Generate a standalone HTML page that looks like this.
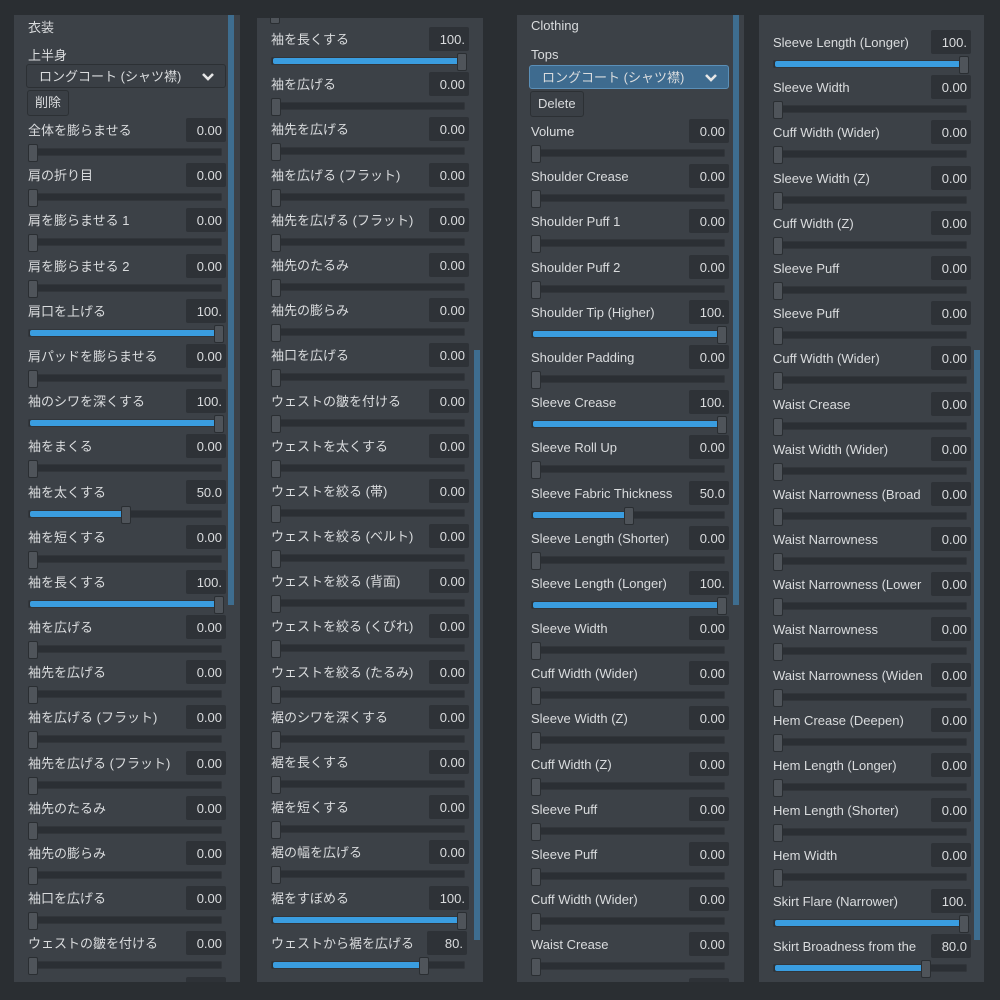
<!DOCTYPE html><html><head><meta charset="utf-8"><style>
body{margin:0;width:1000px;height:1000px;background:#2a2e32;font-family:"Liberation Sans","Noto Sans CJK JP",sans-serif;color:#dadcde;font-size:13px;position:relative;overflow:hidden}
.p{position:absolute;background:#3c4147;overflow:hidden;top:15px;height:967px;width:226px}
.sb{position:absolute;width:6px;background:#3e6d8f}
.ls{position:absolute;left:14px;width:198px}
.r{position:relative;height:45.2px}
.l{position:absolute;left:0;top:6px;line-height:18px;white-space:nowrap;width:155px;overflow:hidden}
.v{position:absolute;right:0;top:2px;width:40px;height:24px;background:#2e3237;border-radius:2px;text-align:right;box-sizing:border-box;padding-right:4px;line-height:25px}
.t{position:absolute;left:0;top:32px;width:194px;height:8px;background:#2b2f34;border-radius:2px;box-shadow:inset 0 0 0 1px #32363b}
.f{position:absolute;left:2px;top:33px;height:6px;background:#3a9de0;border-radius:2px}
.k{position:absolute;top:28px;width:8px;height:16px;background:#4f545a;border:1px solid #2a2e32;border-radius:2px}
.h{position:absolute;left:14px}
.dd{position:absolute;left:12px;width:200px;height:24px;border:1px solid #2c3034;border-radius:3px;background:#3a3f45;line-height:24px;padding-left:12px;box-sizing:border-box}
.dd svg{position:absolute;right:10px;top:7px}
.bt{position:absolute;left:13px;height:24px;border:1px solid #2c3034;border-radius:3px;background:#3a3f45;line-height:24px;padding:0 7px}
</style></head><body>

<div class="p" style="left:14px">
<div class="sb" style="left:214px;top:0;height:590px"></div>
<div class="h" style="top:2px">衣装</div>
<div class="h" style="top:30px">上半身</div>
<div class="dd" style="top:49px">ロングコート (シャツ襟)<svg width="14" height="10" viewBox="0 0 14 10"><path d="M2 2l5 5 5-5" fill="none" stroke="#e6e6e6" stroke-width="2.6"/></svg></div>
<div class="bt" style="top:75px">削除</div>
<div class="ls" style="top:101px">
<div class="r"><div class="l">全体を膨らませる</div><div class="v">0.00</div><div class="t"></div><div class="k" style="left:0"></div></div>
<div class="r"><div class="l">肩の折り目</div><div class="v">0.00</div><div class="t"></div><div class="k" style="left:0"></div></div>
<div class="r"><div class="l">肩を膨らませる 1</div><div class="v">0.00</div><div class="t"></div><div class="k" style="left:0"></div></div>
<div class="r"><div class="l">肩を膨らませる 2</div><div class="v">0.00</div><div class="t"></div><div class="k" style="left:0"></div></div>
<div class="r"><div class="l">肩口を上げる</div><div class="v">100.</div><div class="t"></div><div class="f" style="width:186px"></div><div class="k" style="left:186px"></div></div>
<div class="r"><div class="l">肩パッドを膨らませる</div><div class="v">0.00</div><div class="t"></div><div class="k" style="left:0"></div></div>
<div class="r"><div class="l">袖のシワを深くする</div><div class="v">100.</div><div class="t"></div><div class="f" style="width:186px"></div><div class="k" style="left:186px"></div></div>
<div class="r"><div class="l">袖をまくる</div><div class="v">0.00</div><div class="t"></div><div class="k" style="left:0"></div></div>
<div class="r"><div class="l">袖を太くする</div><div class="v">50.0</div><div class="t"></div><div class="f" style="width:93px"></div><div class="k" style="left:93px"></div></div>
<div class="r"><div class="l">袖を短くする</div><div class="v">0.00</div><div class="t"></div><div class="k" style="left:0"></div></div>
<div class="r"><div class="l">袖を長くする</div><div class="v">100.</div><div class="t"></div><div class="f" style="width:186px"></div><div class="k" style="left:186px"></div></div>
<div class="r"><div class="l">袖を広げる</div><div class="v">0.00</div><div class="t"></div><div class="k" style="left:0"></div></div>
<div class="r"><div class="l">袖先を広げる</div><div class="v">0.00</div><div class="t"></div><div class="k" style="left:0"></div></div>
<div class="r"><div class="l">袖を広げる (フラット)</div><div class="v">0.00</div><div class="t"></div><div class="k" style="left:0"></div></div>
<div class="r"><div class="l">袖先を広げる (フラット)</div><div class="v">0.00</div><div class="t"></div><div class="k" style="left:0"></div></div>
<div class="r"><div class="l">袖先のたるみ</div><div class="v">0.00</div><div class="t"></div><div class="k" style="left:0"></div></div>
<div class="r"><div class="l">袖先の膨らみ</div><div class="v">0.00</div><div class="t"></div><div class="k" style="left:0"></div></div>
<div class="r"><div class="l">袖口を広げる</div><div class="v">0.00</div><div class="t"></div><div class="k" style="left:0"></div></div>
<div class="r"><div class="l">ウェストの皺を付ける</div><div class="v">0.00</div><div class="t"></div><div class="k" style="left:0"></div></div>
<div class="r"><div class="l"></div><div class="v"></div></div>
</div></div>

<div class="p" style="left:257px;top:18px;height:964px">
<div class="sb" style="left:217px;top:332px;height:590px"></div>
<div class="k" style="left:13px;top:-12px"></div>
<div class="ls" style="top:7px">
<div class="r"><div class="l">袖を長くする</div><div class="v">100.</div><div class="t"></div><div class="f" style="width:186px"></div><div class="k" style="left:186px"></div></div>
<div class="r"><div class="l">袖を広げる</div><div class="v">0.00</div><div class="t"></div><div class="k" style="left:0"></div></div>
<div class="r"><div class="l">袖先を広げる</div><div class="v">0.00</div><div class="t"></div><div class="k" style="left:0"></div></div>
<div class="r"><div class="l">袖を広げる (フラット)</div><div class="v">0.00</div><div class="t"></div><div class="k" style="left:0"></div></div>
<div class="r"><div class="l">袖先を広げる (フラット)</div><div class="v">0.00</div><div class="t"></div><div class="k" style="left:0"></div></div>
<div class="r"><div class="l">袖先のたるみ</div><div class="v">0.00</div><div class="t"></div><div class="k" style="left:0"></div></div>
<div class="r"><div class="l">袖先の膨らみ</div><div class="v">0.00</div><div class="t"></div><div class="k" style="left:0"></div></div>
<div class="r"><div class="l">袖口を広げる</div><div class="v">0.00</div><div class="t"></div><div class="k" style="left:0"></div></div>
<div class="r"><div class="l">ウェストの皺を付ける</div><div class="v">0.00</div><div class="t"></div><div class="k" style="left:0"></div></div>
<div class="r"><div class="l">ウェストを太くする</div><div class="v">0.00</div><div class="t"></div><div class="k" style="left:0"></div></div>
<div class="r"><div class="l">ウェストを絞る (帯)</div><div class="v">0.00</div><div class="t"></div><div class="k" style="left:0"></div></div>
<div class="r"><div class="l">ウェストを絞る (ベルト)</div><div class="v">0.00</div><div class="t"></div><div class="k" style="left:0"></div></div>
<div class="r"><div class="l">ウェストを絞る (背面)</div><div class="v">0.00</div><div class="t"></div><div class="k" style="left:0"></div></div>
<div class="r"><div class="l">ウェストを絞る (くびれ)</div><div class="v">0.00</div><div class="t"></div><div class="k" style="left:0"></div></div>
<div class="r"><div class="l">ウェストを絞る (たるみ)</div><div class="v">0.00</div><div class="t"></div><div class="k" style="left:0"></div></div>
<div class="r"><div class="l">裾のシワを深くする</div><div class="v">0.00</div><div class="t"></div><div class="k" style="left:0"></div></div>
<div class="r"><div class="l">裾を長くする</div><div class="v">0.00</div><div class="t"></div><div class="k" style="left:0"></div></div>
<div class="r"><div class="l">裾を短くする</div><div class="v">0.00</div><div class="t"></div><div class="k" style="left:0"></div></div>
<div class="r"><div class="l">裾の幅を広げる</div><div class="v">0.00</div><div class="t"></div><div class="k" style="left:0"></div></div>
<div class="r"><div class="l">裾をすぼめる</div><div class="v">100.</div><div class="t"></div><div class="f" style="width:186px"></div><div class="k" style="left:186px"></div></div>
<div class="r"><div class="l">ウェストから裾を広げる</div><div class="v" style="right:2px">80.</div><div class="t"></div><div class="f" style="width:150px"></div><div class="k" style="left:148px"></div></div>
</div></div>

<div class="p" style="left:517px;width:227px">
<div class="sb" style="left:216px;top:0;height:590px"></div>
<div class="h" style="top:3px">Clothing</div>
<div class="h" style="top:32px">Tops</div>
<div class="dd" style="top:50px;background:#3e6b8f;border-color:#5a8fb8">ロングコート (シャツ襟)<svg width="14" height="10" viewBox="0 0 14 10"><path d="M2 2l5 5 5-5" fill="none" stroke="#e6e6e6" stroke-width="2.6"/></svg></div>
<div class="bt" style="top:76px">Delete</div>
<div class="ls" style="top:102px">
<div class="r"><div class="l">Volume</div><div class="v">0.00</div><div class="t"></div><div class="k" style="left:0"></div></div>
<div class="r"><div class="l">Shoulder Crease</div><div class="v">0.00</div><div class="t"></div><div class="k" style="left:0"></div></div>
<div class="r"><div class="l">Shoulder Puff 1</div><div class="v">0.00</div><div class="t"></div><div class="k" style="left:0"></div></div>
<div class="r"><div class="l">Shoulder Puff 2</div><div class="v">0.00</div><div class="t"></div><div class="k" style="left:0"></div></div>
<div class="r"><div class="l">Shoulder Tip (Higher)</div><div class="v">100.</div><div class="t"></div><div class="f" style="width:186px"></div><div class="k" style="left:186px"></div></div>
<div class="r"><div class="l">Shoulder Padding</div><div class="v">0.00</div><div class="t"></div><div class="k" style="left:0"></div></div>
<div class="r"><div class="l">Sleeve Crease</div><div class="v">100.</div><div class="t"></div><div class="f" style="width:186px"></div><div class="k" style="left:186px"></div></div>
<div class="r"><div class="l">Sleeve Roll Up</div><div class="v">0.00</div><div class="t"></div><div class="k" style="left:0"></div></div>
<div class="r"><div class="l">Sleeve Fabric Thickness</div><div class="v">50.0</div><div class="t"></div><div class="f" style="width:93px"></div><div class="k" style="left:93px"></div></div>
<div class="r"><div class="l">Sleeve Length (Shorter)</div><div class="v">0.00</div><div class="t"></div><div class="k" style="left:0"></div></div>
<div class="r"><div class="l">Sleeve Length (Longer)</div><div class="v">100.</div><div class="t"></div><div class="f" style="width:186px"></div><div class="k" style="left:186px"></div></div>
<div class="r"><div class="l">Sleeve Width</div><div class="v">0.00</div><div class="t"></div><div class="k" style="left:0"></div></div>
<div class="r"><div class="l">Cuff Width (Wider)</div><div class="v">0.00</div><div class="t"></div><div class="k" style="left:0"></div></div>
<div class="r"><div class="l">Sleeve Width (Z)</div><div class="v">0.00</div><div class="t"></div><div class="k" style="left:0"></div></div>
<div class="r"><div class="l">Cuff Width (Z)</div><div class="v">0.00</div><div class="t"></div><div class="k" style="left:0"></div></div>
<div class="r"><div class="l">Sleeve Puff</div><div class="v">0.00</div><div class="t"></div><div class="k" style="left:0"></div></div>
<div class="r"><div class="l">Sleeve Puff</div><div class="v">0.00</div><div class="t"></div><div class="k" style="left:0"></div></div>
<div class="r"><div class="l">Cuff Width (Wider)</div><div class="v">0.00</div><div class="t"></div><div class="k" style="left:0"></div></div>
<div class="r"><div class="l">Waist Crease</div><div class="v">0.00</div><div class="t"></div><div class="k" style="left:0"></div></div>
<div class="r"><div class="l"></div><div class="v"></div></div>
</div></div>

<div class="p" style="left:759px;width:225px">
<div class="sb" style="left:215px;top:335px;height:590px"></div>
<div class="ls" style="top:13px">
<div class="r"><div class="l">Sleeve Length (Longer)</div><div class="v">100.</div><div class="t"></div><div class="f" style="width:186px"></div><div class="k" style="left:186px"></div></div>
<div class="r"><div class="l">Sleeve Width</div><div class="v">0.00</div><div class="t"></div><div class="k" style="left:0"></div></div>
<div class="r"><div class="l">Cuff Width (Wider)</div><div class="v">0.00</div><div class="t"></div><div class="k" style="left:0"></div></div>
<div class="r"><div class="l">Sleeve Width (Z)</div><div class="v">0.00</div><div class="t"></div><div class="k" style="left:0"></div></div>
<div class="r"><div class="l">Cuff Width (Z)</div><div class="v">0.00</div><div class="t"></div><div class="k" style="left:0"></div></div>
<div class="r"><div class="l">Sleeve Puff</div><div class="v">0.00</div><div class="t"></div><div class="k" style="left:0"></div></div>
<div class="r"><div class="l">Sleeve Puff</div><div class="v">0.00</div><div class="t"></div><div class="k" style="left:0"></div></div>
<div class="r"><div class="l">Cuff Width (Wider)</div><div class="v">0.00</div><div class="t"></div><div class="k" style="left:0"></div></div>
<div class="r"><div class="l">Waist Crease</div><div class="v">0.00</div><div class="t"></div><div class="k" style="left:0"></div></div>
<div class="r"><div class="l">Waist Width (Wider)</div><div class="v">0.00</div><div class="t"></div><div class="k" style="left:0"></div></div>
<div class="r"><div class="l">Waist Narrowness (Broad</div><div class="v">0.00</div><div class="t"></div><div class="k" style="left:0"></div></div>
<div class="r"><div class="l">Waist Narrowness</div><div class="v">0.00</div><div class="t"></div><div class="k" style="left:0"></div></div>
<div class="r"><div class="l">Waist Narrowness (Lower</div><div class="v">0.00</div><div class="t"></div><div class="k" style="left:0"></div></div>
<div class="r"><div class="l">Waist Narrowness</div><div class="v">0.00</div><div class="t"></div><div class="k" style="left:0"></div></div>
<div class="r"><div class="l">Waist Narrowness (Widen</div><div class="v">0.00</div><div class="t"></div><div class="k" style="left:0"></div></div>
<div class="r"><div class="l">Hem Crease (Deepen)</div><div class="v">0.00</div><div class="t"></div><div class="k" style="left:0"></div></div>
<div class="r"><div class="l">Hem Length (Longer)</div><div class="v">0.00</div><div class="t"></div><div class="k" style="left:0"></div></div>
<div class="r"><div class="l">Hem Length (Shorter)</div><div class="v">0.00</div><div class="t"></div><div class="k" style="left:0"></div></div>
<div class="r"><div class="l">Hem Width</div><div class="v">0.00</div><div class="t"></div><div class="k" style="left:0"></div></div>
<div class="r"><div class="l">Skirt Flare (Narrower)</div><div class="v">100.</div><div class="t"></div><div class="f" style="width:186px"></div><div class="k" style="left:186px"></div></div>
<div class="r"><div class="l">Skirt Broadness from the</div><div class="v">80.0</div><div class="t"></div><div class="f" style="width:150px"></div><div class="k" style="left:148px"></div></div>
</div></div>
</body></html>
